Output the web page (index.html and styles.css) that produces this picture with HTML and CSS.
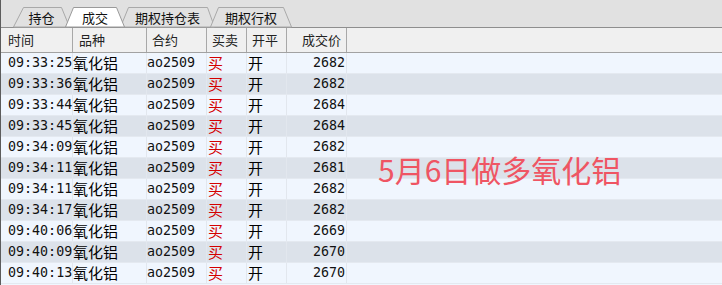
FILE: index.html
```html
<!DOCTYPE html>
<html lang="zh-CN">
<head>
<meta charset="utf-8">
<title>成交</title>
<link rel="stylesheet" href="styles.css">
</head>
<body>
<div class="panel">
  <div class="tabbar">
    <div class="tab t1"><svg class="tabshape" viewBox="0 0 57 20" preserveAspectRatio="none"><polygon points="0.5,20 10.5,0.5 48.5,0.5 56.5,20"/></svg><span>持仓</span></div>
    <div class="tab t2 active"><svg class="tabshape" viewBox="0 0 60 20" preserveAspectRatio="none"><polygon points="0.5,20 8.5,0.5 51.5,0.5 59.5,20"/></svg><span>成交</span></div>
    <div class="tab t3"><svg class="tabshape" viewBox="0 0 95 20" preserveAspectRatio="none"><polygon points="0.5,20 8.5,0.5 87.5,0.5 94.5,20"/></svg><span>期权持仓表</span></div>
    <div class="tab t4"><svg class="tabshape" viewBox="0 0 82 20" preserveAspectRatio="none"><polygon points="0.5,20 8.5,0.5 73.5,0.5 81.5,20"/></svg><span>期权行权</span></div>
  </div>
  <div class="grid head">
    <div class="c c1">时间</div>
    <div class="c c2">品种</div>
    <div class="c c3">合约</div>
    <div class="c c4">买卖</div>
    <div class="c c5">开平</div>
    <div class="c c6">成交价</div>
    <div class="c c7"></div>
  </div>
  <div class="rows">
    <div class="grid row"><div class="c c1 mono">09:33:25</div><div class="c c2">氧化铝</div><div class="c c3 mono">ao2509</div><div class="c c4 buy">买</div><div class="c c5">开</div><div class="c c6 mono">2682</div><div class="c c7"></div></div>
    <div class="grid row"><div class="c c1 mono">09:33:36</div><div class="c c2">氧化铝</div><div class="c c3 mono">ao2509</div><div class="c c4 buy">买</div><div class="c c5">开</div><div class="c c6 mono">2682</div><div class="c c7"></div></div>
    <div class="grid row"><div class="c c1 mono">09:33:44</div><div class="c c2">氧化铝</div><div class="c c3 mono">ao2509</div><div class="c c4 buy">买</div><div class="c c5">开</div><div class="c c6 mono">2684</div><div class="c c7"></div></div>
    <div class="grid row"><div class="c c1 mono">09:33:45</div><div class="c c2">氧化铝</div><div class="c c3 mono">ao2509</div><div class="c c4 buy">买</div><div class="c c5">开</div><div class="c c6 mono">2684</div><div class="c c7"></div></div>
    <div class="grid row"><div class="c c1 mono">09:34:09</div><div class="c c2">氧化铝</div><div class="c c3 mono">ao2509</div><div class="c c4 buy">买</div><div class="c c5">开</div><div class="c c6 mono">2682</div><div class="c c7"></div></div>
    <div class="grid row"><div class="c c1 mono">09:34:11</div><div class="c c2">氧化铝</div><div class="c c3 mono">ao2509</div><div class="c c4 buy">买</div><div class="c c5">开</div><div class="c c6 mono">2681</div><div class="c c7"></div></div>
    <div class="grid row"><div class="c c1 mono">09:34:11</div><div class="c c2">氧化铝</div><div class="c c3 mono">ao2509</div><div class="c c4 buy">买</div><div class="c c5">开</div><div class="c c6 mono">2682</div><div class="c c7"></div></div>
    <div class="grid row"><div class="c c1 mono">09:34:17</div><div class="c c2">氧化铝</div><div class="c c3 mono">ao2509</div><div class="c c4 buy">买</div><div class="c c5">开</div><div class="c c6 mono">2682</div><div class="c c7"></div></div>
    <div class="grid row"><div class="c c1 mono">09:40:06</div><div class="c c2">氧化铝</div><div class="c c3 mono">ao2509</div><div class="c c4 buy">买</div><div class="c c5">开</div><div class="c c6 mono">2669</div><div class="c c7"></div></div>
    <div class="grid row"><div class="c c1 mono">09:40:09</div><div class="c c2">氧化铝</div><div class="c c3 mono">ao2509</div><div class="c c4 buy">买</div><div class="c c5">开</div><div class="c c6 mono">2670</div><div class="c c7"></div></div>
    <div class="grid row"><div class="c c1 mono">09:40:13</div><div class="c c2">氧化铝</div><div class="c c3 mono">ao2509</div><div class="c c4 buy">买</div><div class="c c5">开</div><div class="c c6 mono">2670</div><div class="c c7"></div></div>
  </div>
  <div class="note">5月6日做多氧化铝</div>
</div>
</body>
</html>
```
FILE: styles.css
```css
html, body {
  margin: 0;
  padding: 0;
  background: #f0f6fe;
}
body {
  font-family: "Noto Sans CJK SC", "Noto Sans", sans-serif;
  color: #000;
  width: 722px;
  height: 285px;
  overflow: hidden;
}
.panel {
  position: relative;
  border-left: 1px solid #5c5c5c;
  height: 285px;
  box-sizing: border-box;
}
.tabbar {
  display: flex;
  align-items: flex-end;
  height: 28px;
  box-sizing: border-box;
  padding: 8px 0 0 12px;
  background: #e1e1e1;
  border-bottom: 1px solid #8e8e8e;
}
.tab {
  position: relative;
  height: 20px;
  display: flex;
  align-items: center;
  justify-content: center;
  font-size: 13px;
  color: #111;
  margin-left: -5px;
}
.tab.t1 { width: 57px; margin-left: 0; }
.tab.t2 { width: 60px; z-index: 2; }
.tab.t3 { width: 95px; }
.tab.t4 { width: 82px; }
.tab span {
  position: relative;
  padding-top: 1px;
  line-height: 18px;
}
.tabshape {
  position: absolute;
  left: 0;
  top: 0;
  width: 100%;
  height: 100%;
  overflow: visible;
}
.tabshape polygon {
  fill: #e1e1e1;
  stroke: #a9a9a9;
  stroke-width: 1;
}
.tab.active .tabshape polygon {
  fill: #ffffff;
  stroke: #9a9a9a;
}
.grid {
  display: grid;
  grid-template-columns: 72px 74px 60px 40px 40px 60px 1fr;
}
.head {
  height: 25px;
  box-sizing: border-box;
  background: #f0f0f0;
  border-bottom: 1px solid #a2a2a2;
  font-size: 13px;
  color: #222;
}
.head .c {
  border-right: 1px solid #a8a8a8;
  line-height: 24px;
}
.head .c1 { padding-left: 7px; }
.head .c2 { padding-left: 6px; }
.head .c3 { padding-left: 5px; }
.head .c4 { padding-left: 5px; }
.head .c5 { padding-left: 5px; }
.head .c6 { text-align: right; padding-right: 5px; }
.head .c7 { border-right: none; }
.c {
  box-sizing: border-box;
  white-space: nowrap;
}
.row {
  height: 21px;
  box-sizing: border-box;
  border-bottom: 1px solid #e4e9f0;
  font-size: 15px;
  line-height: 20px;
  background: #f0f6fe;
}
.row:nth-child(even) {
  background: #dce2ea;
}
.row .c {
  border-right: 1px solid #e2e7ee;
}
.row .c7 { border-right: none; }
.mono {
  font-family: "DejaVu Sans Mono", "Liberation Mono", monospace;
  font-size: 13.33px;
  color: #111;
}
.row .c1 { padding-left: 7px; }
.row .c2 { padding-left: 0; }
.row .c3 { padding-left: 0; }
.row .c4 { padding-left: 1px; color: #111; }
.row .c4.buy { color: #d40000; }
.row .c5 { padding-left: 1px; }
.row .c6 { text-align: right; padding-right: 1px; }
.note {
  position: absolute;
  left: 377px;
  top: 152px;
  font-size: 30px;
  line-height: 34px;
  color: #ef5563;
}
```
